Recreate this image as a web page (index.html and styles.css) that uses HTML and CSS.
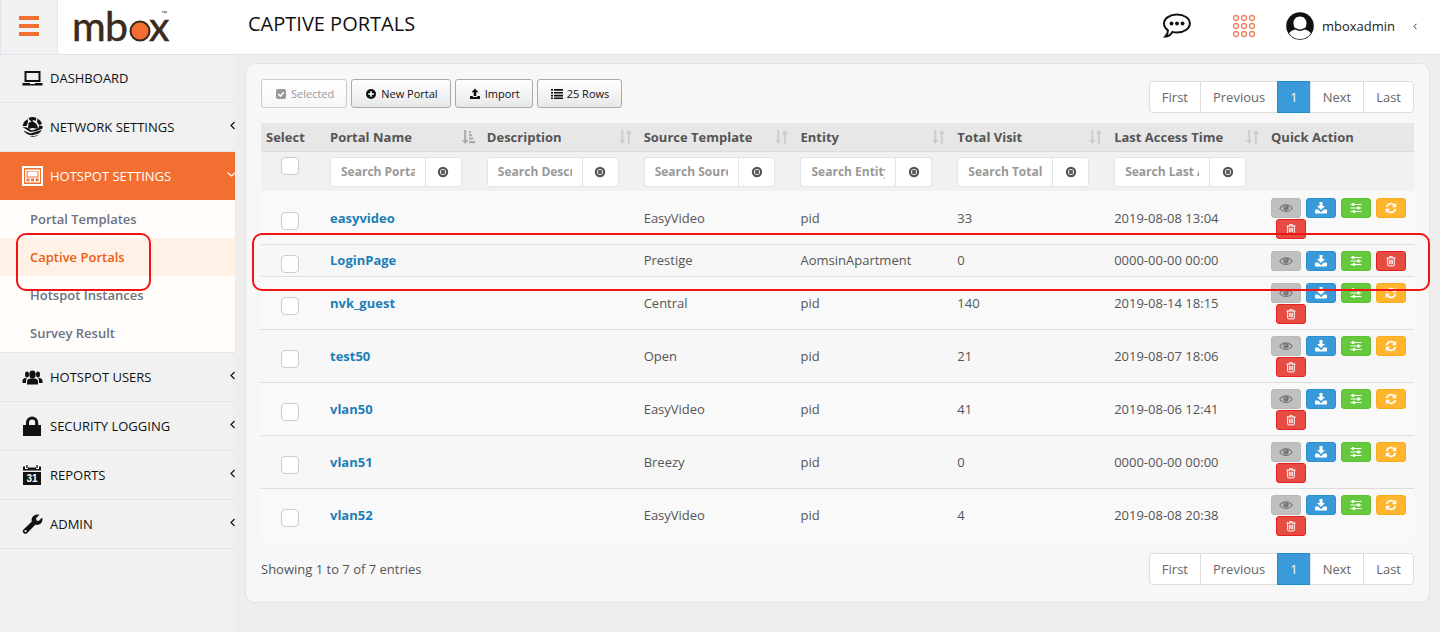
FILE: index.html
```
<!DOCTYPE html>
<html lang="en">
<head>
    <meta charset="UTF-8">
    <meta name="viewport" content="width=device-width, initial-scale=1.0">
    <title>mbox - Captive Portals</title>
    <link rel="stylesheet" href="styles.css">
</head>
<body>
    <!-- Icon sprite -->
    <svg class="sprite" aria-hidden="true">
        <symbol id="i-eye" viewBox="0 0 14 12"><path fill="none" stroke="currentColor" stroke-width="1.1" d="M.8 6.2C3.6 1.8 10.4 1.8 13.2 6.2C10.4 10.4 3.6 10.4.8 6.2z"/><circle cx="7" cy="5.8" r="2.8" fill="currentColor"/><path fill="none" stroke="#c0c0c0" stroke-width=".7" d="M5.5 5.6A1.5 1.5 0 0 1 7 4.2"/></symbol>
        <symbol id="i-download" viewBox="0 0 14 12"><path fill="currentColor" d="M5.5 0h3v4H11L7 8 3 4h2.500zM1.800 7.500h2.400L7 10.200 9.800 7.500h2.400q.8 0 .8.8v2.400q0 .8-.8.8H1.800q-.8 0-.8-.8V8.300q0-.8.8-.8z"/></symbol>
        <symbol id="i-sliders" viewBox="0 0 14 12"><path stroke="currentColor" stroke-width="1.200" d="M1.500 2.500h11M1.500 6h11M1.500 9.500h11"/><path stroke="currentColor" stroke-width="2.200" d="M4 1v3M9.500 4.500v3M5 8v3"/></symbol>
        <symbol id="i-refresh" viewBox="0 0 14 12"><path fill="none" stroke="currentColor" stroke-width="1.700" d="M2.700 5.200A4.300 4.300 0 0 1 10.300 3.300M11.300 6.800A4.300 4.300 0 0 1 3.700 8.700"/><path fill="currentColor" d="M12.200.8v4.400H7.800zM1.800 11.200V6.800h4.400z"/></symbol>
        <symbol id="i-trash" viewBox="0 0 14 12"><path fill="none" stroke="currentColor" stroke-width="1" d="M2.500 3h9M5.200 3l.5-1.400h2.600L8.800 3M3.700 3v7q0 .9.9.9h4.800q.9 0 .9-.9V3M5.700 4.800v4.400M7 4.800v4.400M8.300 4.800v4.400"/></symbol>
        <symbol id="i-clear" viewBox="0 0 12 12"><circle cx="6" cy="6" r="4.100" fill="none" stroke="currentColor" stroke-width="2.200"/><path stroke="currentColor" stroke-width="2" d="M4.300 4.300l3.400 3.400M7.700 4.300L4.300 7.700"/></symbol>
        <symbol id="i-sort" viewBox="0 0 13 14"><path fill="currentColor" d="M2.200 0h2v10h2.300L3.200 14 0 10h2.200zM8.800 14h2V4H13L9.800 0 6.500 4h2.300z"/></symbol>
        <symbol id="i-sorted" viewBox="0 0 13 14"><path fill="currentColor" d="M2.200 0h2v10h2.300L3.200 14 0 10h2.200zM7 1h2v2H7zM7 4.300h3v2H7zM7 7.600h4.500v2H7zM7 11h6v2.200H7z"/></symbol>
        <symbol id="i-left" viewBox="0 0 5 9"><path fill="none" stroke="currentColor" stroke-width="1.200" d="M4.500 1L1 4.500 4.500 8"/></symbol>
    </svg>

    <header class="topbar">
        <button type="button" class="menu-toggle" aria-label="Toggle menu"><span></span><span></span><span></span></button>
        <a href="#" class="logo" aria-label="mbox">
            <svg width="110" height="54" viewBox="0 0 110 54">
                <g fill="#3a2a1c" stroke="#3a2a1c" stroke-width=".5" font-family="Lato, sans-serif" font-size="41">
                    <text x="5" y="41">m</text>
                    <text x="38" y="41">b</text>
                    <text x="82" y="41">x</text>
                </g>
                <circle cx="73" cy="31" r="9.500" fill="#f36f31" stroke="#3a2a1c" stroke-width="2"/>
                <text x="94" y="15" fill="#3a2a1c" font-family="Liberation Sans, sans-serif" font-size="6">™</text>
            </svg>
        </a>
        <h1>CAPTIVE PORTALS</h1>
        <div class="user-tools">
            <button type="button" class="tool" aria-label="Messages">
                <svg width="30" height="26" viewBox="0 0 30 26"><path fill="#fff" stroke="#111" stroke-width="2" d="M15 1.500c7 0 12.800 3.800 12.800 9S22 19.500 15 19.500c-1.600 0-3.200-.2-4.600-.6-1.600 2.600-4 4.400-7 4.600 1.800-2 2.600-4 2.500-6.300C3.500 15.500 2 13 2 10.500c0-5.200 5.800-9 13-9z"/><g fill="#111"><circle cx="9.500" cy="10.500" r="1.900"/><circle cx="15" cy="10.500" r="1.900"/><circle cx="20.500" cy="10.500" r="1.900"/></g></svg>
            </button>
            <button type="button" class="tool tool-apps" aria-label="Apps">
                <svg width="24" height="24" viewBox="0 0 24 24" fill="none" stroke="#f08060" stroke-width="1.300"><circle cx="4" cy="4" r="2.500"/><circle cx="12" cy="4" r="2.500"/><circle cx="20" cy="4" r="2.500"/><circle cx="4" cy="12" r="2.500"/><circle cx="12" cy="12" r="2.500"/><circle cx="20" cy="12" r="2.500"/><circle cx="4" cy="20" r="2.500"/><circle cx="12" cy="20" r="2.500"/><circle cx="20" cy="20" r="2.500"/></svg>
            </button>
            <a href="#" class="user">
                <svg width="28" height="28" viewBox="0 0 28 28"><circle cx="14" cy="14" r="13.800" fill="#111"/><path fill="#fff" d="M14 4.500c4 0 6.500 2.800 6.500 6.800 0 2.600-1 4.600-2.300 5.900 2.800.9 5.600 2 6.700 4A13 13 0 0 1 3.100 21.200c1.100-2 3.900-3.100 6.700-4-1.300-1.300-2.300-3.300-2.300-5.900 0-4 2.500-6.800 6.500-6.800z"/><path fill="none" stroke="#111" stroke-width="1.500" d="M9 16.300c2.500 2.500 7.500 2.500 10 0"/></svg>
                <span>mboxadmin</span>
                <svg class="user-arrow" width="4" height="7"><use href="#i-left"/></svg>
            </a>
        </div>
    </header>

    <div class="layout">
        <nav class="sidebar">
            <ul class="menu">
                <li><a href="#">
                    <svg width="20" height="20" viewBox="0 0 20 20"><path fill="none" stroke="currentColor" stroke-width="2" d="M3 4h14v9H3z"/><path fill="currentColor" d="M0 15h7.500v1h5v-1H20v2.500H0z"/></svg>
                    <span>DASHBOARD</span></a></li>
                <li><a href="#">
                    <svg width="20" height="20" viewBox="0 0 20 20"><path fill="currentColor" d="M6 1Q10-1 14 1L13 4l-2-1-2 1.500L7 3zM1.500 5L5 2l.5 3L4 9H0zM15 1.500Q18 3 19.500 7l-3 1-2-3zM6 6l4-2 4 3 2 5-6-1-4.500 1zM0 10l4.500.5 4.500 3 7-2 .5-3L20 9v2.500L14 14l-6 1zM1 13.500l7 3L19.300 13q-1 2-3.300 3.500l-6 1.800Q4 18 1 13.500zM7 19.500q5 1.500 10-2l-5 1.500z"/></svg>
                    <span>NETWORK SETTINGS</span>
                    <svg class="arrow" width="5" height="9"><use href="#i-left"/></svg></a></li>
                <li class="open"><a href="#">
                    <svg width="21" height="20" viewBox="0 0 21 20"><path fill="none" stroke="currentColor" stroke-width="2" d="M1 1h19v18H1z"/><path fill="currentColor" fill-rule="evenodd" d="M3 3.500h15v13H3zM4.500 5v6.500h12V5zM4.500 12.500v2.800h3v-2.800zM9 12.500v2.800h3v-2.800zM13.500 12.500v2.800h3v-2.800z"/><path fill="currentColor" d="M5.500 5.500h10v5h-10z"/></svg>
                    <span>HOTSPOT SETTINGS</span>
                    <svg class="arrow" width="8" height="5" viewBox="0 0 8 5"><path fill="none" stroke="currentColor" stroke-width="1.200" d="M.5.5l4 3.500 4-3.500"/></svg></a>
                    <ul class="submenu">
                        <li><a href="#">Portal Templates</a></li>
                        <li class="current"><a href="#">Captive Portals</a><span class="marker"></span></li>
                        <li><a href="#">Hotspot Instances</a></li>
                        <li><a href="#">Survey Result</a></li>
                    </ul>
                </li>
                <li><a href="#">
                    <svg width="20" height="20" viewBox="0 0 20 20"><g fill="currentColor"><ellipse cx="10" cy="7.500" rx="3.200" ry="4"/><path d="M4.500 17.500v-3q0-2.500 3-3h5q3 .5 3 3v3z"/><ellipse cx="4.500" cy="7.500" rx="2" ry="3"/><ellipse cx="15.500" cy="7.500" rx="2" ry="3"/><path d="M0 16v-2.500q0-2 2.500-2.500h1.700Q3.300 12.500 3.500 16zM20 16v-2.500q0-2-2.500-2.500h-1.700q.9 1.500.7 5z"/></g></svg>
                    <span>HOTSPOT USERS</span>
                    <svg class="arrow" width="5" height="9"><use href="#i-left"/></svg></a></li>
                <li><a href="#">
                    <svg width="20" height="20" viewBox="0 0 20 20"><path fill="currentColor" d="M.5 9h18v11H.5z"/><path fill="none" stroke="currentColor" stroke-width="3" d="M5 10V6.500a4.600 4.600 0 0 1 9.200 0V10"/></svg>
                    <span>SECURITY LOGGING</span>
                    <svg class="arrow" width="5" height="9"><use href="#i-left"/></svg></a></li>
                <li><a href="#">
                    <svg width="20" height="20" viewBox="0 0 20 20"><path fill="currentColor" d="M.5 7h18v13H.5zM.5 1.500h2V4h3V2.500h8V4h3V1.500h2V5.500H.5z"/><path stroke="currentColor" stroke-width="1.300" d="M4.500 0v3M14.500 0v3"/><text x="9.500" y="17" fill="#fff" font-family="Liberation Sans, sans-serif" font-size="10" font-weight="bold" text-anchor="middle">31</text></svg>
                    <span>REPORTS</span>
                    <svg class="arrow" width="5" height="9"><use href="#i-left"/></svg></a></li>
                <li><a href="#">
                    <svg width="20" height="20" viewBox="0 0 20 20"><path fill="currentColor" fill-rule="evenodd" d="M17 .8L13.500 4.200l.5 2.200 2.200.5L19.600 3.500Q20.800 7.500 18 9.800q-2.300 1.700-5 .8L4.500 19.200q-1.500 1.200-3.200 0-1.800-1.500-.5-3.500L9.300 7.500Q8.500 4.500 10.500 2.300 13.500-.5 17 .8zM3 16a1 1 0 1 0 .1 0z"/></svg>
                    <span>ADMIN</span>
                    <svg class="arrow" width="5" height="9"><use href="#i-left"/></svg></a></li>
            </ul>
        </nav>

        <main class="panel">
            <div class="toolbar">
                <div class="buttons">
                    <button type="button" class="btn" disabled><svg width="12" height="12" viewBox="0 0 12 12"><rect x="1" y="1" width="10" height="10" rx="2" fill="currentColor"/><path fill="none" stroke="#fff" stroke-width="1.600" d="M3.300 6l2 2 3.600-3.800"/></svg>Selected</button>
                    <button type="button" class="btn"><svg width="12" height="12" viewBox="0 0 12 12"><circle cx="6" cy="6" r="5" fill="currentColor"/><path stroke="#fff" stroke-width="1.600" d="M6 3.200v5.600M3.200 6h5.600"/></svg>New Portal</button>
                    <button type="button" class="btn"><svg width="12" height="12" viewBox="0 0 12 12"><path fill="currentColor" d="M6 .5L2.500 4.300h2.200V8h2.600V4.300h2.200zM1 8h2.800v1h4.400V8H11v3H1z"/></svg>Import</button>
                    <button type="button" class="btn"><svg width="12" height="12" viewBox="0 0 12 12"><path fill="currentColor" d="M0 1h2v1.700H0zM3 1h9v1.700H3zM0 3.900h2v1.700H0zM3 3.900h9v1.700H3zM0 6.800h2v1.700H0zM3 6.800h9v1.700H3zM0 9.500h2V11H0zM3 9.500h9V11H3z"/></svg>25 Rows</button>
                </div>
                <div class="pagination">
                    <a href="#">First</a><a href="#">Previous</a><a href="#" class="active">1</a><a href="#">Next</a><a href="#">Last</a>
                </div>
            </div>

            <table class="portals">
                <thead>
                    <tr class="titles">
                        <th class="col-select">Select</th>
                        <th><div class="sort sorted">Portal Name<svg width="13" height="14"><use href="#i-sorted"/></svg></div></th>
                        <th><div class="sort">Description<svg width="13" height="14"><use href="#i-sort"/></svg></div></th>
                        <th><div class="sort">Source Template<svg width="13" height="14"><use href="#i-sort"/></svg></div></th>
                        <th><div class="sort">Entity<svg width="13" height="14"><use href="#i-sort"/></svg></div></th>
                        <th><div class="sort">Total Visit<svg width="13" height="14"><use href="#i-sort"/></svg></div></th>
                        <th><div class="sort">Last Access Time<svg width="13" height="14"><use href="#i-sort"/></svg></div></th>
                        <th class="col-action">Quick Action</th>
                    </tr>
                    <tr class="filters">
                        <td><input type="checkbox" class="check" aria-label="Select all"></td>
                        <td><div class="filter"><input type="text" placeholder="Search Portal Name" aria-label="Search Portal Name"><button type="button" aria-label="Clear"><svg width="12" height="12"><use href="#i-clear"/></svg></button></div></td>
                        <td><div class="filter"><input type="text" placeholder="Search Description" aria-label="Search Description"><button type="button" aria-label="Clear"><svg width="12" height="12"><use href="#i-clear"/></svg></button></div></td>
                        <td><div class="filter"><input type="text" placeholder="Search Source Template" aria-label="Search Source Template"><button type="button" aria-label="Clear"><svg width="12" height="12"><use href="#i-clear"/></svg></button></div></td>
                        <td><div class="filter"><input type="text" placeholder="Search Entity" aria-label="Search Entity"><button type="button" aria-label="Clear"><svg width="12" height="12"><use href="#i-clear"/></svg></button></div></td>
                        <td><div class="filter"><input type="text" placeholder="Search Total Visit" aria-label="Search Total Visit"><button type="button" aria-label="Clear"><svg width="12" height="12"><use href="#i-clear"/></svg></button></div></td>
                        <td><div class="filter"><input type="text" placeholder="Search Last Access Time" aria-label="Search Last Access Time"><button type="button" aria-label="Clear"><svg width="12" height="12"><use href="#i-clear"/></svg></button></div></td>
                        <td></td>
                    </tr>
                </thead>
                <tbody>
                    <tr>
                        <td><input type="checkbox" class="check" aria-label="Select easyvideo"></td>
                        <td><a href="#">easyvideo</a></td><td></td><td>EasyVideo</td><td>pid</td><td>33</td><td>2019-08-08 13:04</td>
                        <td><div class="actions">
                            <button type="button" class="view" aria-label="View"><svg><use href="#i-eye"/></svg></button>
                            <button type="button" class="download" aria-label="Download"><svg><use href="#i-download"/></svg></button>
                            <button type="button" class="settings" aria-label="Settings"><svg><use href="#i-sliders"/></svg></button>
                            <button type="button" class="refresh" aria-label="Refresh"><svg><use href="#i-refresh"/></svg></button>
                            <button type="button" class="delete" aria-label="Delete"><svg><use href="#i-trash"/></svg></button>
                        </div></td>
                    </tr>
                    <tr class="marked">
                        <td><input type="checkbox" class="check" aria-label="Select LoginPage"><span class="marker"></span></td>
                        <td><a href="#">LoginPage</a></td><td></td><td>Prestige</td><td>AomsinApartment</td><td>0</td><td>0000-00-00 00:00</td>
                        <td><div class="actions">
                            <button type="button" class="view" aria-label="View"><svg><use href="#i-eye"/></svg></button>
                            <button type="button" class="download" aria-label="Download"><svg><use href="#i-download"/></svg></button>
                            <button type="button" class="settings" aria-label="Settings"><svg><use href="#i-sliders"/></svg></button>
                            <button type="button" class="delete" aria-label="Delete"><svg><use href="#i-trash"/></svg></button>
                        </div></td>
                    </tr>
                    <tr>
                        <td><input type="checkbox" class="check" aria-label="Select nvk_guest"></td>
                        <td><a href="#">nvk_guest</a></td><td></td><td>Central</td><td>pid</td><td>140</td><td>2019-08-14 18:15</td>
                        <td><div class="actions">
                            <button type="button" class="view" aria-label="View"><svg><use href="#i-eye"/></svg></button>
                            <button type="button" class="download" aria-label="Download"><svg><use href="#i-download"/></svg></button>
                            <button type="button" class="settings" aria-label="Settings"><svg><use href="#i-sliders"/></svg></button>
                            <button type="button" class="refresh" aria-label="Refresh"><svg><use href="#i-refresh"/></svg></button>
                            <button type="button" class="delete" aria-label="Delete"><svg><use href="#i-trash"/></svg></button>
                        </div></td>
                    </tr>
                    <tr>
                        <td><input type="checkbox" class="check" aria-label="Select test50"></td>
                        <td><a href="#">test50</a></td><td></td><td>Open</td><td>pid</td><td>21</td><td>2019-08-07 18:06</td>
                        <td><div class="actions">
                            <button type="button" class="view" aria-label="View"><svg><use href="#i-eye"/></svg></button>
                            <button type="button" class="download" aria-label="Download"><svg><use href="#i-download"/></svg></button>
                            <button type="button" class="settings" aria-label="Settings"><svg><use href="#i-sliders"/></svg></button>
                            <button type="button" class="refresh" aria-label="Refresh"><svg><use href="#i-refresh"/></svg></button>
                            <button type="button" class="delete" aria-label="Delete"><svg><use href="#i-trash"/></svg></button>
                        </div></td>
                    </tr>
                    <tr>
                        <td><input type="checkbox" class="check" aria-label="Select vlan50"></td>
                        <td><a href="#">vlan50</a></td><td></td><td>EasyVideo</td><td>pid</td><td>41</td><td>2019-08-06 12:41</td>
                        <td><div class="actions">
                            <button type="button" class="view" aria-label="View"><svg><use href="#i-eye"/></svg></button>
                            <button type="button" class="download" aria-label="Download"><svg><use href="#i-download"/></svg></button>
                            <button type="button" class="settings" aria-label="Settings"><svg><use href="#i-sliders"/></svg></button>
                            <button type="button" class="refresh" aria-label="Refresh"><svg><use href="#i-refresh"/></svg></button>
                            <button type="button" class="delete" aria-label="Delete"><svg><use href="#i-trash"/></svg></button>
                        </div></td>
                    </tr>
                    <tr>
                        <td><input type="checkbox" class="check" aria-label="Select vlan51"></td>
                        <td><a href="#">vlan51</a></td><td></td><td>Breezy</td><td>pid</td><td>0</td><td>0000-00-00 00:00</td>
                        <td><div class="actions">
                            <button type="button" class="view" aria-label="View"><svg><use href="#i-eye"/></svg></button>
                            <button type="button" class="download" aria-label="Download"><svg><use href="#i-download"/></svg></button>
                            <button type="button" class="settings" aria-label="Settings"><svg><use href="#i-sliders"/></svg></button>
                            <button type="button" class="refresh" aria-label="Refresh"><svg><use href="#i-refresh"/></svg></button>
                            <button type="button" class="delete" aria-label="Delete"><svg><use href="#i-trash"/></svg></button>
                        </div></td>
                    </tr>
                    <tr>
                        <td><input type="checkbox" class="check" aria-label="Select vlan52"></td>
                        <td><a href="#">vlan52</a></td><td></td><td>EasyVideo</td><td>pid</td><td>4</td><td>2019-08-08 20:38</td>
                        <td><div class="actions">
                            <button type="button" class="view" aria-label="View"><svg><use href="#i-eye"/></svg></button>
                            <button type="button" class="download" aria-label="Download"><svg><use href="#i-download"/></svg></button>
                            <button type="button" class="settings" aria-label="Settings"><svg><use href="#i-sliders"/></svg></button>
                            <button type="button" class="refresh" aria-label="Refresh"><svg><use href="#i-refresh"/></svg></button>
                            <button type="button" class="delete" aria-label="Delete"><svg><use href="#i-trash"/></svg></button>
                        </div></td>
                    </tr>
                </tbody>
            </table>

            <div class="table-footer">
                <span>Showing 1 to 7 of 7 entries</span>
                <div class="pagination">
                    <a href="#">First</a><a href="#">Previous</a><a href="#" class="active">1</a><a href="#">Next</a><a href="#">Last</a>
                </div>
            </div>
        </main>
    </div>
</body>
</html>
```
FILE: styles.css
```
* {
    box-sizing: border-box;
}
body {
    margin: 0;
    font-family: "Open Sans", sans-serif;
    font-size: 13px;
    line-height: 20px;
    color: #555;
    background-color: #eee;
}
a {
    text-decoration: none;
}
button, input {
    font-family: inherit;
    margin: 0;
}
svg {
    display: block;
    flex-shrink: 0;
}
.sprite {
    position: absolute;
    width: 0;
    height: 0;
}

/* Top bar */
.topbar {
    display: flex;
    height: 55px;
    background: #fff;
    border-bottom: 1px solid #dde5ee;
}
.menu-toggle {
    display: flex;
    flex-direction: column;
    align-items: center;
    justify-content: center;
    gap: 4px;
    width: 58px;
    padding: 0 1px 2px 0;
    background: #f1f1f1;
    border: 1px solid #dde5ee;
    border-width: 0 1px;
}
.menu-toggle span {
    width: 20px;
    height: 4px;
    background: #f36f31;
}
.logo {
    width: 190px;
    padding-left: 9px;
}
.logo svg {
    overflow: visible;
}
h1 {
    margin: 0;
    font-size: 20px;
    font-weight: 400;
    line-height: 48px;
    color: #111;
}
.user-tools {
    display: flex;
    align-items: center;
    margin-left: auto;
    padding: 0 23px 2px 0;
}
.tool {
    padding: 0;
    border: none;
    background: none;
}
.tool-apps {
    margin: 0 30px 0 40px;
}
.user {
    display: flex;
    align-items: center;
    gap: 8px;
    color: #222;
}
.user-arrow {
    margin-left: 10px;
}

.layout {
    display: flex;
    min-height: calc(100vh - 55px);
}

/* Sidebar */
.sidebar {
    flex: 0 0 235px;
    background: #f1f1f1;
}
.menu, .submenu {
    margin: 0;
    padding: 0;
    list-style: none;
}
.menu > li {
    border-bottom: 1px solid #dde5ee;
}
.menu > li > a {
    display: flex;
    align-items: center;
    height: 48px;
    padding-left: 22px;
    color: #111;
}
.menu > li > a span {
    margin-left: 7px;
}
.menu > li:first-child > a {
    height: 47px;
    padding-bottom: 2px;
}
.menu > li > a > svg:first-child {
    width: 21px;
}
.menu .arrow {
    margin: 0 0 4px auto;
}
.menu > .open > a {
    color: #fff;
    font-weight: 500;
    background: #f36f31;
}
.submenu {
    background: #fffcfa;
}
.submenu li {
    position: relative;
}
.submenu a {
    display: block;
    padding: 9px 30px;
    font-weight: 600;
    color: #6b7280;
}
.submenu .current {
    background: #fff1e6;
}
.submenu .current a {
    color: #ea5c14;
}

/* Red outlines over the current item and row */
.marker {
    position: absolute;
    z-index: 2;
    border: 2px solid #f01414;
    border-radius: 10px;
    pointer-events: none;
}
.submenu .marker {
    top: -5px;
    left: 16px;
    width: 135px;
    height: 58px;
}
.marked .marker {
    top: -11px;
    right: -16px;
    bottom: -15px;
    left: -9px;
}

/* Content panel */
.panel {
    flex: 1;
    align-self: flex-start;
    min-width: 0;
    margin: 8px 10px;
    padding: 15px 15px 17px;
    background: #f7f7f7;
    border: 1px solid #dde5ee;
    border-radius: 10px;
}
.toolbar {
    display: flex;
    align-items: flex-start;
    justify-content: space-between;
    padding-bottom: 10px;
}
.toolbar .pagination {
    margin-top: 2px;
}
.buttons {
    display: flex;
    gap: 4px;
}
.btn {
    display: flex;
    align-items: center;
    gap: 4px;
    height: 29px;
    padding: 0 12px 0 13px;
    font-size: 11px;
    color: #111;
    background: linear-gradient(#fff, #e8e8e8);
    border: 1px solid #aaa;
    border-radius: 3px;
}
.btn:disabled {
    color: #999;
    background: linear-gradient(#fff, #f6f6f6);
    border-color: #ccc;
}
.pagination {
    display: flex;
}
.pagination a {
    margin-left: -1px;
    padding: 5px 12px;
    color: #666;
    background: #fff;
    border: 1px solid #ddd;
}
.pagination a:first-child {
    border-radius: 4px 0 0 4px;
}
.pagination a:last-child {
    border-radius: 0 4px 4px 0;
}
.pagination .active {
    color: #fff;
    background: #3a99d8;
    border-color: #1f8bd0;
}

/* Table */
.portals {
    width: 100%;
    table-layout: fixed;
    border-collapse: separate;
    border-spacing: 0;
}
.col-select {
    width: 64px;
}
.col-action {
    width: 148px;
}
.portals th, .portals td {
    padding: 0 5px;
    text-align: left;
}
.titles th {
    height: 29px;
    background: #e7e7e7;
    border-bottom: 1px solid #ddd;
    font-weight: 700;
}
.sort {
    display: flex;
    align-items: center;
    justify-content: space-between;
    margin-right: 2px;
    white-space: nowrap;
}
.sort svg {
    color: #ccc;
}
.sorted svg {
    color: #aaa;
}
.filters td {
    height: 39px;
    background: #f1f1f1;
}
.filter {
    display: flex;
    margin-right: 15px;
}
.filter input {
    flex: 1;
    min-width: 0;
    height: 30px;
    padding: 0 10px;
    font-size: 12px;
    font-weight: 700;
    border: 1px solid #dde5ee;
    border-radius: 3px 0 0 3px;
}
.filter input::placeholder {
    color: #999;
}
.filter button {
    display: flex;
    align-items: center;
    justify-content: center;
    width: 37px;
    margin-left: -1px;
    padding: 0;
    color: #555;
    background: #fff;
    border: 1px solid #dde5ee;
    border-radius: 0 3px 3px 0;
}
.check {
    display: block;
    width: 18px;
    height: 18px;
    margin: 6px auto 0;
    appearance: none;
    background: #fff;
    border: 1px solid #ccc;
    border-radius: 4px;
}
.filters .check {
    margin: 0 auto 12px;
}
.portals tbody td {
    padding: 5px 5px 6px;
    border-top: 1px solid #ddd;
}
.portals tbody td:last-child {
    padding: 6px 5px 5px;
}
.portals tbody tr:first-child td {
    border-top-color: #f9f9f9;
}
.portals tbody tr:nth-child(odd) {
    background: #f9f9f9;
}
.portals tbody a {
    font-weight: 700;
    color: #1c7fb6;
}
.portals tbody .marked {
    position: relative;
}
.portals tr td:first-child {
    padding: 0 11px 0 5px;
}
.actions {
    display: flex;
    flex-wrap: wrap;
    row-gap: 1px;
}
.actions button {
    display: flex;
    align-items: center;
    justify-content: center;
    width: 30px;
    height: 20px;
    margin-left: 5px;
    padding: 0;
    color: #fff;
    border: 1px solid transparent;
    border-radius: 3px;
}
.actions svg {
    width: 14px;
    height: 12px;
}
.actions .view {
    margin-left: 0;
    color: #777;
    background: #c0c0c0;
    border-color: #b8b8b8;
}
.actions .download {
    background: #3a99d8;
    border-color: #2a8fd0;
}
.actions .settings {
    background: #66c93d;
    border-color: #5cc232;
}
.actions .refresh {
    background: #ffb52e;
    border-color: #fbac1d;
}
.actions .delete {
    background: #e74c43;
    border-color: #e62020;
}
.table-footer {
    display: flex;
    align-items: center;
    justify-content: space-between;
    padding-top: 12px;
}
```
